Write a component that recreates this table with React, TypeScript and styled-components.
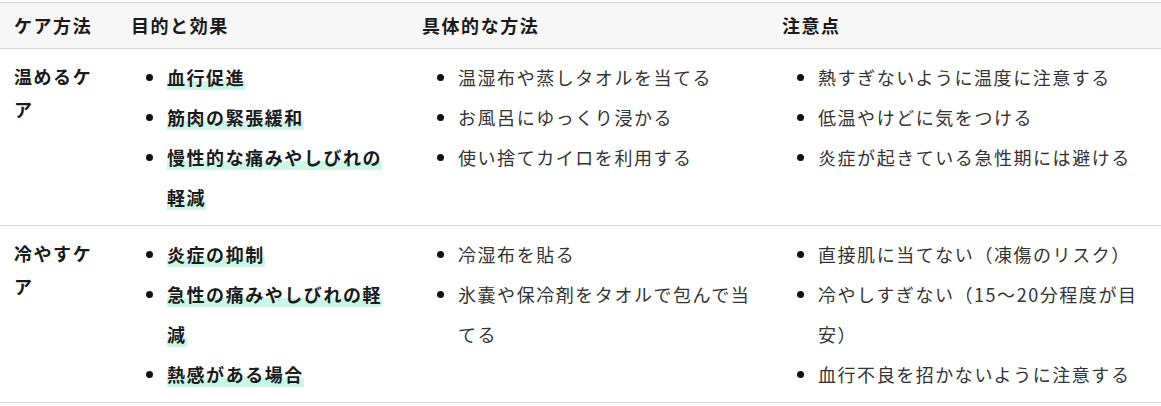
import React from "react";
import styled, { createGlobalStyle } from "styled-components";

const Global = createGlobalStyle`
  html, body { margin: 0; padding: 0; background: #fff; }
  body {
    font-family: "Noto Sans CJK JP", "Noto Sans", sans-serif;
    color: #333;
  }
`;

const Wrap = styled.div`
  padding-top: 2px;
`;

const Table = styled.table`
  width: 1161px;
  border-collapse: collapse;
  table-layout: fixed;
  font-size: 18px;
  letter-spacing: 1.55px;
`;

const HeadRow = styled.tr`
  background: #f7f7f7;
  border-top: 1px solid #d4d4d4;
  border-bottom: 1px solid #d4d4d4;
`;

const Th = styled.th`
  text-align: left;
  font-weight: 700;
  color: #1a1a1a;
  padding: 8px 14px;
  line-height: 29px;
`;

const Row = styled.tr`
  border-bottom: 1px solid #d4d4d4;
`;

const RowHead = styled.th`
  text-align: left;
  vertical-align: top;
  font-weight: 700;
  color: #1a1a1a;
  padding: 11px 14px 8px;
  line-height: 33px;
`;

const Td = styled.td`
  vertical-align: top;
  padding: 8px 14px;
`;

const List = styled.ul`
  margin: 0;
  padding-left: 36px;
  list-style: disc;
`;

const Item = styled.li`
  line-height: 40px;
  &::marker { color: #111; }
`;

const Mark = styled.strong`
  font-weight: 700;
  color: #1a1a1a;
  background: linear-gradient(transparent 64%, #ccf7e8 64%);
`;

type RowData = {
  name: string;
  effects: string[];
  methods: string[];
  notes: string[];
};

const rows: RowData[] = [
  {
    name: "温めるケア",
    effects: ["血行促進", "筋肉の緊張緩和", "慢性的な痛みやしびれの軽減"],
    methods: ["温湿布や蒸しタオルを当てる", "お風呂にゆっくり浸かる", "使い捨てカイロを利用する"],
    notes: ["熱すぎないように温度に注意する", "低温やけどに気をつける", "炎症が起きている急性期には避ける"],
  },
  {
    name: "冷やすケア",
    effects: ["炎症の抑制", "急性の痛みやしびれの軽減", "熱感がある場合"],
    methods: ["冷湿布を貼る", "氷嚢や保冷剤をタオルで包んで当てる"],
    notes: ["直接肌に当てない（凍傷のリスク）", "冷やしすぎない（15〜20分程度が目安）", "血行不良を招かないように注意する"],
  },
];

export default function App() {
  return (
    <Wrap>
      <Global />
      <Table>
        <colgroup>
          <col style={{ width: 117 }} />
          <col style={{ width: 291 }} />
          <col style={{ width: 360 }} />
          <col style={{ width: 393 }} />
        </colgroup>
        <thead>
          <HeadRow>
            <Th>ケア方法</Th>
            <Th>目的と効果</Th>
            <Th>具体的な方法</Th>
            <Th>注意点</Th>
          </HeadRow>
        </thead>
        <tbody>
          {rows.map((r) => (
            <Row key={r.name}>
              <RowHead>{r.name}</RowHead>
              <Td>
                <List>
                  {r.effects.map((e) => (
                    <Item key={e}>
                      <Mark>{e}</Mark>
                    </Item>
                  ))}
                </List>
              </Td>
              <Td>
                <List>
                  {r.methods.map((m) => (
                    <Item key={m}>{m}</Item>
                  ))}
                </List>
              </Td>
              <Td>
                <List>
                  {r.notes.map((n) => (
                    <Item key={n}>{n}</Item>
                  ))}
                </List>
              </Td>
            </Row>
          ))}
        </tbody>
      </Table>
    </Wrap>
  );
}
